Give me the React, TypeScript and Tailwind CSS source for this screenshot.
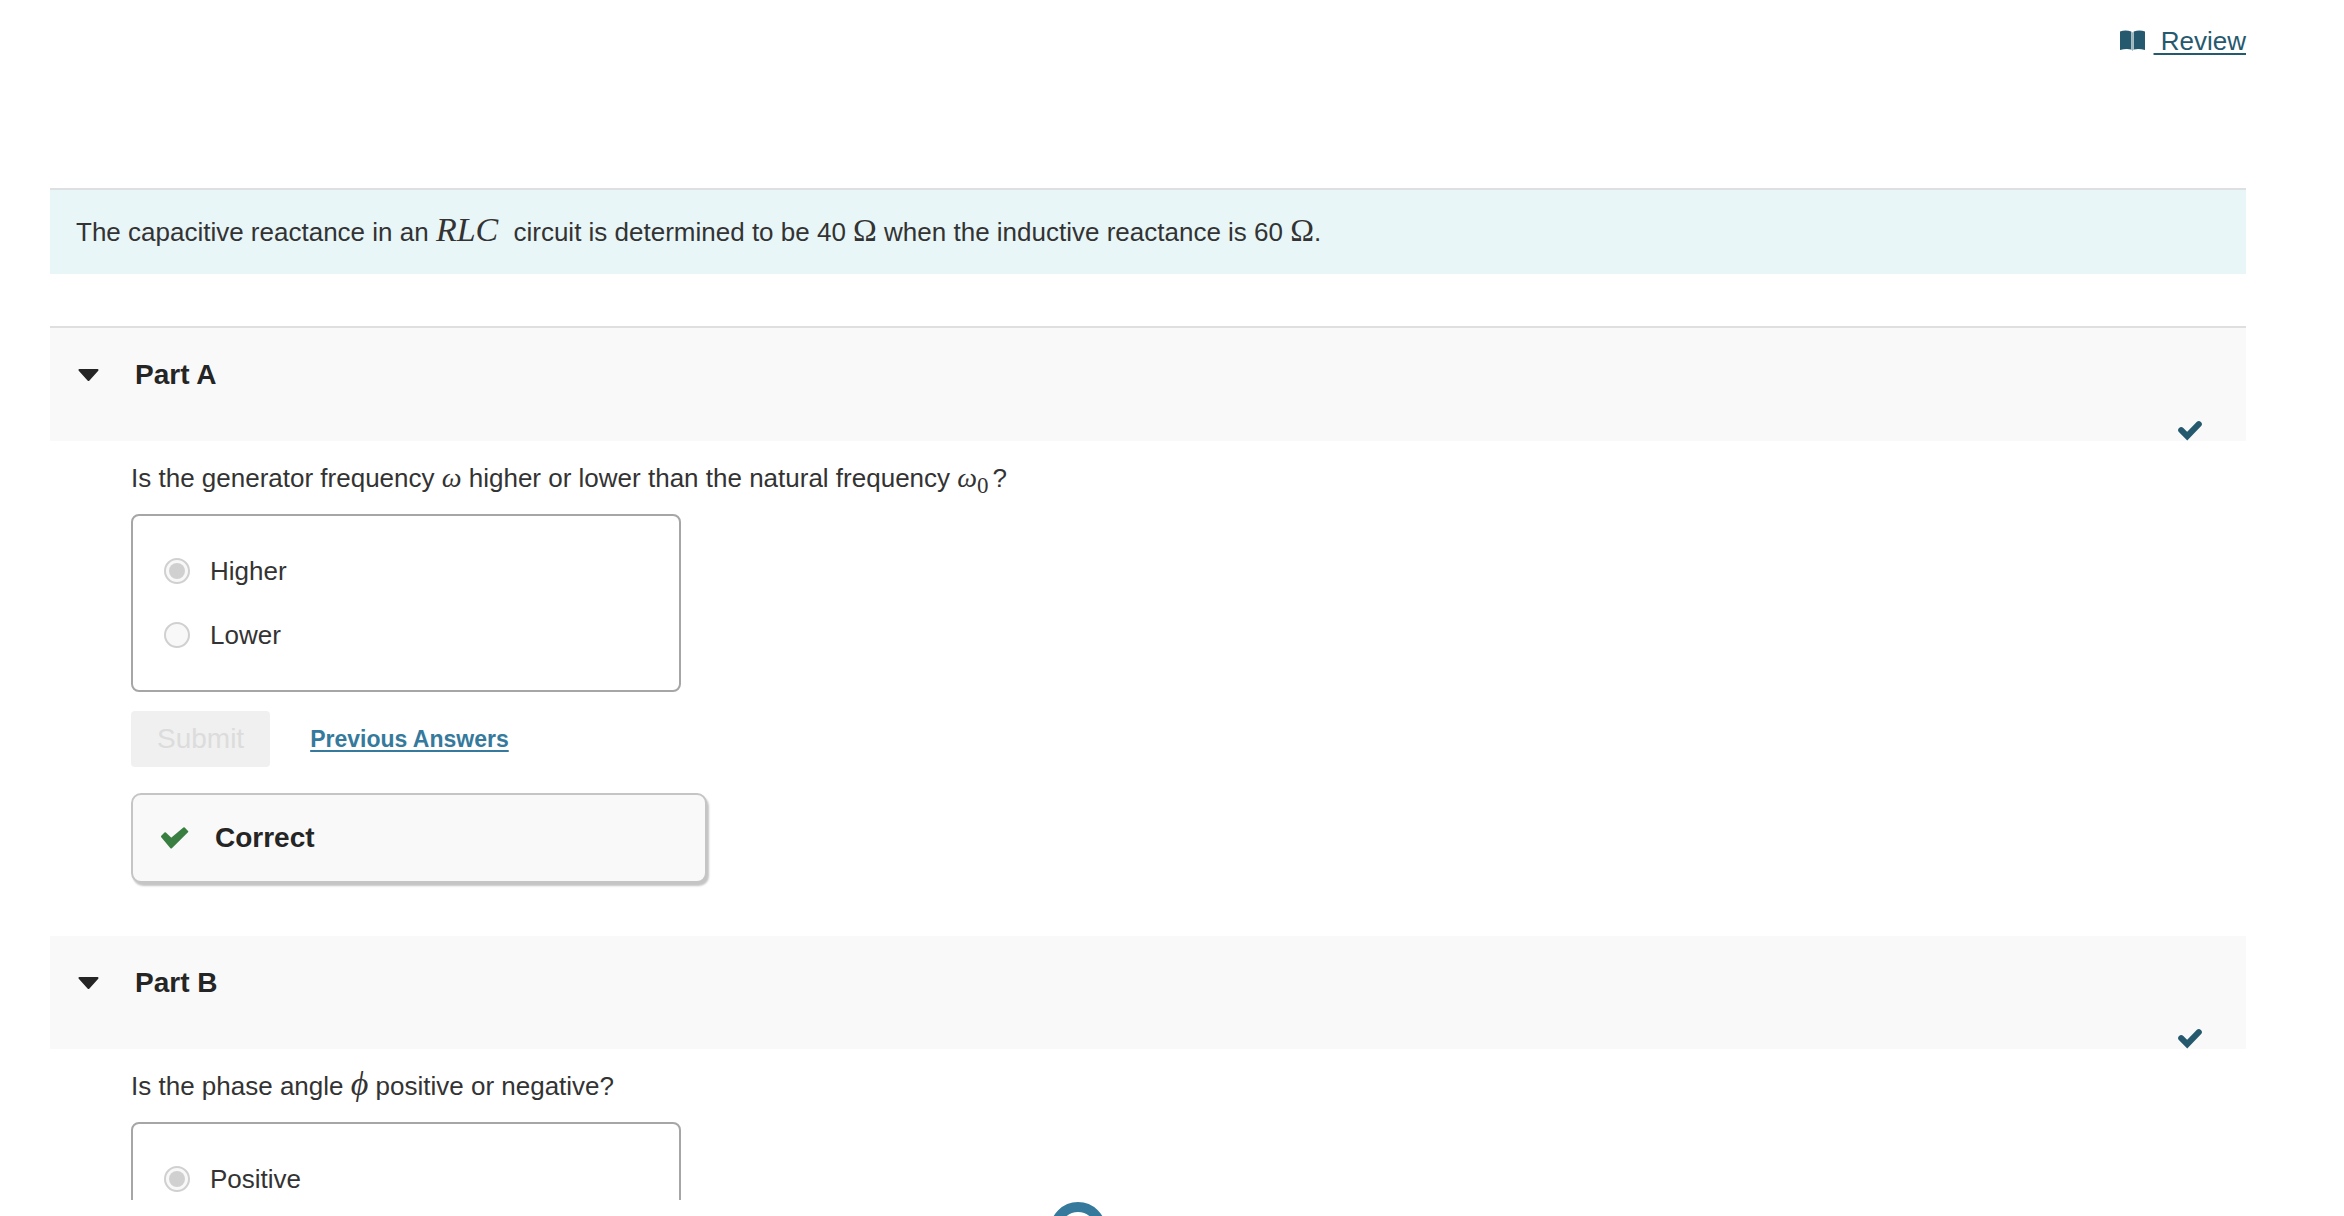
// src/App.tsx
import React from 'react';

interface PartProps {
  id: string;
  title: string;
  question: React.ReactNode;
  options: string[];
  bordered?: boolean;
  feedback?: string;
}

// Inline math symbols, set in a serif face without growing the line
const MathText: React.FC<{ children: React.ReactNode; className?: string }> = ({ children, className = '' }) => (
  <span className={`font-['Liberation_Serif',serif] leading-none ${className}`}>{children}</span>
);

const BookIcon: React.FC = () => (
  <svg className="h-[22px] w-[25px]" viewBox="0 0 25 22" aria-hidden="true">
    <path d="M0 1.5Q5.5 -0.5 11.2 1.5V19.5Q6 18.5 0 20Z" fill="#25596e" />
    <path d="M25 1.5Q19.5 -0.5 13.8 1.5V19.5Q19 18.5 25 20Z" fill="#25596e" />
    <path d="M11.2 1.5L12.5 2.5L13.8 1.5V19.5L12.5 21L11.2 19.5Z" fill="#9db4bd" />
  </svg>
);

// Small tick in the corner of a finished part
const DoneIcon: React.FC = () => (
  <svg className="h-5 w-6" viewBox="0 0 24 20" role="img" aria-label="Completed">
    <path d="M3.2 9.2L9.2 15.2L20.8 3.2" fill="none" stroke="#25596e" strokeWidth="6" strokeLinecap="round" />
  </svg>
);

const CorrectIcon: React.FC = () => (
  <svg className="h-[22px] w-[29px]" viewBox="0 0 29 22" aria-hidden="true">
    <path
      d="M2 9.5L5.2 6.2L11.2 12L24 1.2L27.3 4.6L11.2 20.5Z"
      fill="#3a7f42"
      stroke="#3a7f42"
      strokeWidth="2"
      strokeLinejoin="round"
    />
  </svg>
);

const Part: React.FC<PartProps> = ({ id, title, question, options, bordered, feedback }) => {
  return (
    <section>
      <div className={`flex justify-between bg-[#f9f9f9] pl-7 pr-11 ${bordered ? 'border-t-2 border-[#dedfe0]' : ''}`}>
        <button type="button" className="flex items-center gap-9 pb-[46px] pt-[27px]">
          <svg className="h-3 w-[21px]" viewBox="0 0 21 12" aria-hidden="true">
            <path d="M1.5 1H19.5L10.5 11Z" fill="#252525" stroke="#252525" strokeWidth="2" strokeLinejoin="round" />
          </svg>
          <h2 className="text-[28px] font-bold leading-10 text-[#252525]">{title}</h2>
        </button>
        <div className="self-end">
          <DoneIcon />
        </div>
      </div>

      <div className="pl-[81px] pt-[17px]">
        <p className="leading-10">{question}</p>

        {/* Answer choices */}
        <div className="mt-4 flex w-[550px] flex-col gap-6 rounded-lg border-2 border-[#a6a6a6] py-[35px] pl-[31px]">
          {options.map((option, index) => (
            <label key={option} className="flex items-center gap-5 leading-10">
              <input
                type="radio"
                name={id}
                disabled
                defaultChecked={index === 0}
                className="size-[26px] appearance-none rounded-full border-2 border-[#d0d0d0] bg-[#f8f8f8] p-[3px] before:block before:size-4 before:rounded-full checked:before:bg-[#d0d0d0]"
              />
              {option}
            </label>
          ))}
        </div>

        {feedback && (
          <>
            <div className="mt-[19px] flex items-center gap-10">
              <button
                type="button"
                disabled
                className="h-14 rounded-sm bg-[#f0f0f0] px-[26px] text-[28px] text-[#dcdcdc]"
              >
                Submit
              </button>
              <a
                href="#previous"
                className="text-[23px] font-bold text-[#357a9c] underline decoration-2 underline-offset-[3px]"
              >
                Previous Answers
              </a>
            </div>

            <div className="mt-[26px] flex h-[90px] w-[576px] items-center gap-[26px] rounded-[10px] border-2 border-[#c5c5c5] bg-[#f9f9f9] pl-[27px] shadow-[2px_3px_2px_#c5c5c5]">
              <CorrectIcon />
              <h3 className="text-[28px] font-bold text-[#252525]">{feedback}</h3>
            </div>
          </>
        )}
      </div>
    </section>
  );
};

function App() {
  return (
    <div className="flex h-screen flex-col bg-white font-['Liberation_Sans',Arial,sans-serif] text-[26px] text-[#333333]">
      <main className="min-h-0 flex-1 overflow-hidden pl-[50px] pr-[98px]">
        <header className="flex items-center justify-end gap-[9px] pt-[21px] leading-10 text-[#25596e]">
          <BookIcon />
          <a href="#review" className="whitespace-pre underline decoration-2 underline-offset-[3px]">
            {' Review'}
          </a>
        </header>

        {/* Problem statement */}
        <p className="mt-[127px] border-t-2 border-[#dedfe0] bg-[#e8f6f7] px-[26px] py-[22px] leading-10">
          The capacitive reactance in an <MathText className="mr-2 text-[34px] italic">RLC</MathText> circuit is
          determined to be 40 <MathText className="text-[32px]">Ω</MathText> when the inductive reactance is 60{' '}
          <MathText className="text-[32px]">Ω</MathText>.
        </p>

        <div className="mt-[52px] flex flex-col gap-[53px]">
          <Part
            id="part-a"
            title="Part A"
            bordered
            question={
              <>
                Is the generator frequency <MathText className="text-[28px] italic">ω</MathText> higher or lower than
                the natural frequency <MathText className="text-[28px] italic">ω</MathText>
                <sub className="mr-1 font-['Liberation_Serif',serif] text-[23px] leading-none">0</sub>?
              </>
            }
            options={['Higher', 'Lower']}
            feedback="Correct"
          />
          <Part
            id="part-b"
            title="Part B"
            question={
              <>
                Is the phase angle <MathText className="text-[34px] italic">ϕ</MathText> positive or negative?
              </>
            }
            options={['Positive']}
          />
        </div>
      </main>

      {/* Loading ring peeking out of the bottom edge */}
      <footer className="flex h-4 justify-center overflow-hidden pr-[188px]">
        <div className="mt-0.5 size-14 shrink-0 rounded-full border-[10px] border-[#357a9c]" />
      </footer>
    </div>
  );
}

export default App;
